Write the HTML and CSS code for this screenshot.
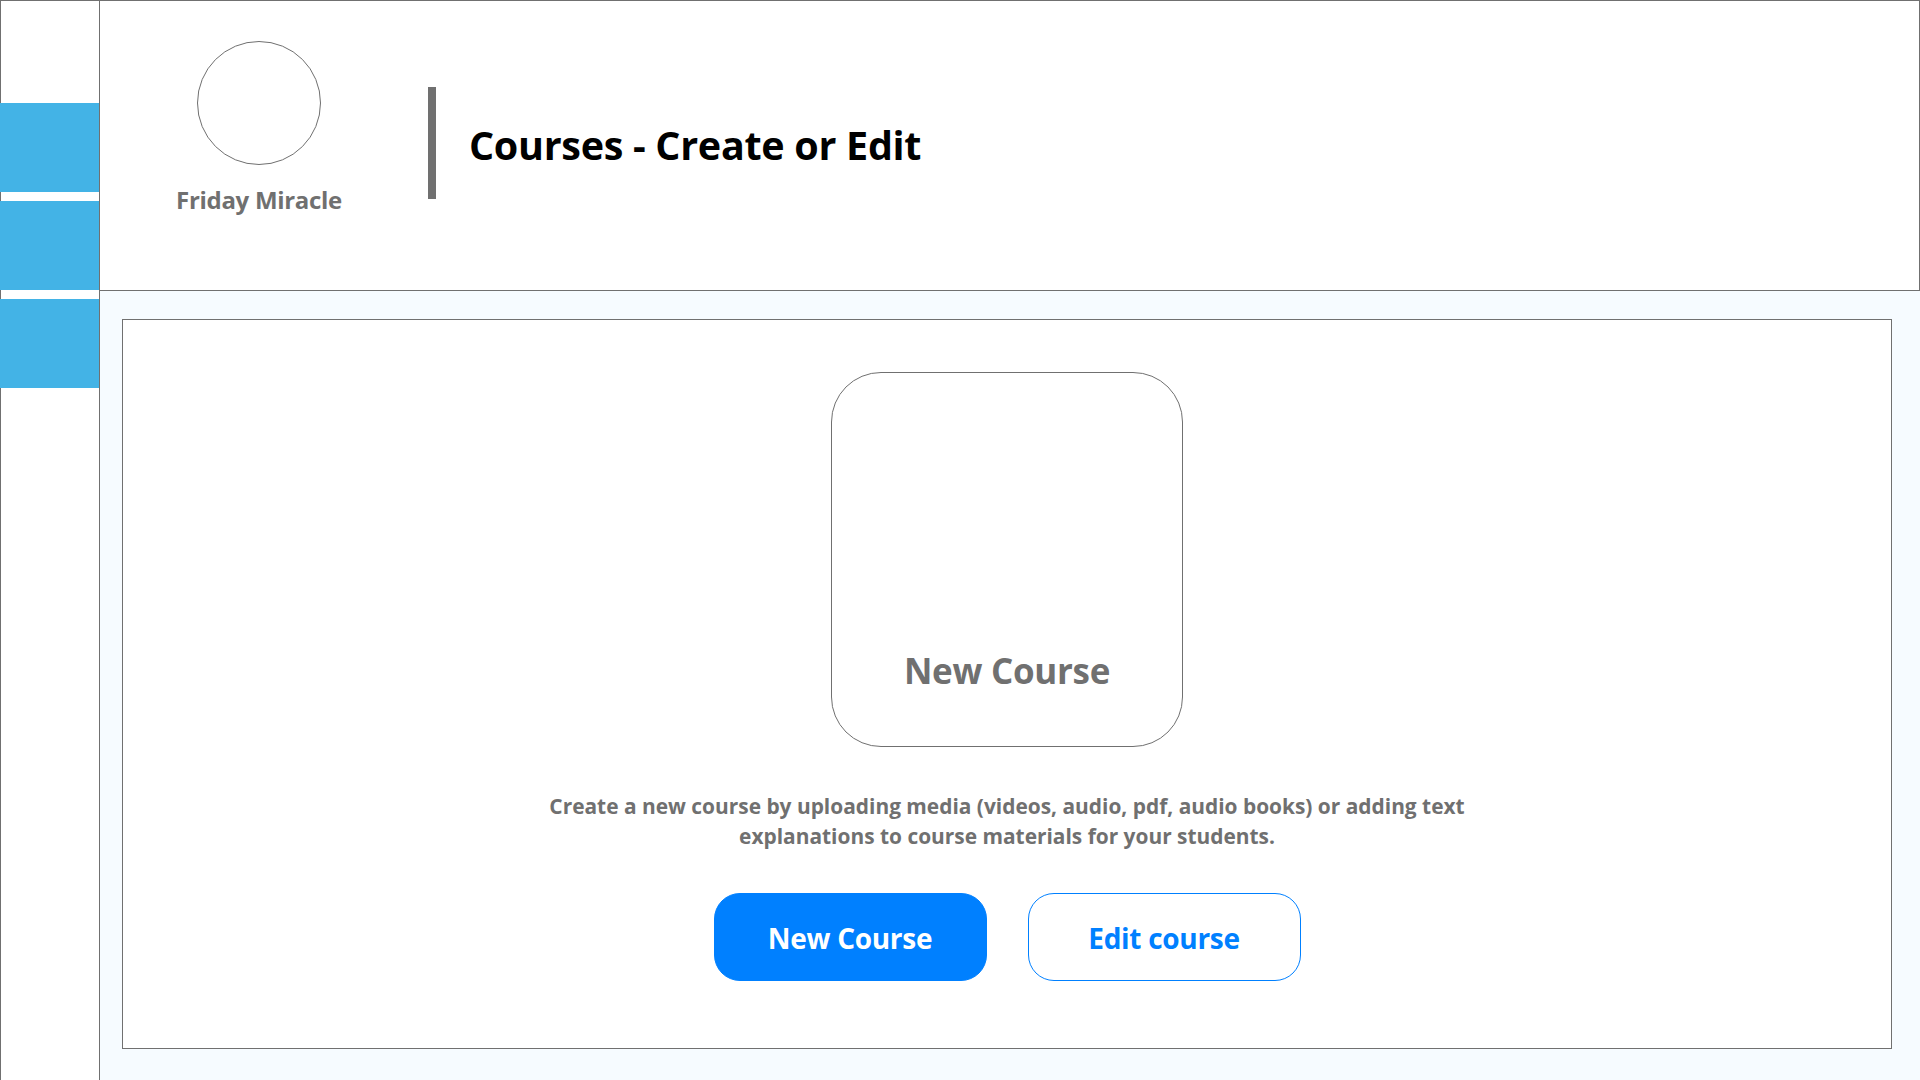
FILE: index.html
```html
<!DOCTYPE html>
<html lang="en">
<head>
<meta charset="utf-8">
<title>Courses - Create or Edit</title>
<link rel="stylesheet" href="styles.css">
</head>
<body>
<div class="app">
  <aside class="sidebar">
    <div class="nav-block"></div>
    <div class="nav-block"></div>
    <div class="nav-block"></div>
  </aside>
  <div class="main-col">
    <header class="header">
      <div class="profile">
        <div class="avatar"></div>
        <div class="profile-name">Friday Miracle</div>
      </div>
      <div class="divider"></div>
      <h1 class="page-title">Courses - Create or Edit</h1>
    </header>
    <main class="content">
      <section class="card">
        <div class="tile">
          <span class="tile-label">New Course</span>
        </div>
        <p class="description">Create a new course by uploading media (videos, audio, pdf, audio books) or adding text<br>explanations to course materials for your students.</p>
        <div class="actions">
          <button class="btn btn-primary">New Course</button>
          <button class="btn btn-outline">Edit course</button>
        </div>
      </section>
    </main>
  </div>
</div>
</body>
</html>
```
FILE: styles.css
```css
* { box-sizing: border-box; }
html, body {
  margin: 0;
  padding: 0;
  height: 100%;
}
body {
  font-family: "Open Sans", "Noto Sans", "Liberation Sans", sans-serif;
  background: #ffffff;
}
.app {
  display: flex;
  width: 1920px;
  height: 1080px;
}
.sidebar {
  width: 100px;
  flex: none;
  border-left: 1px solid #707070;
  border-top: 1px solid #707070;
  border-right: 1px solid #707070;
  background: #ffffff;
  padding-top: 102px;
  display: flex;
  flex-direction: column;
  gap: 9px;
}
.nav-block {
  height: 89px;
  background: #43b3e6;
  margin-left: -1px;
}
.main-col {
  flex: 1;
  display: flex;
  flex-direction: column;
  min-width: 0;
}
.header {
  height: 291px;
  flex: none;
  border-top: 1px solid #707070;
  border-right: 1px solid #707070;
  border-bottom: 1px solid #707070;
  background: #ffffff;
  display: flex;
  align-items: flex-start;
}
.profile {
  width: 318px;
  display: flex;
  flex-direction: column;
  align-items: center;
  padding-top: 40px;
}
.avatar {
  width: 124px;
  height: 124px;
  border: 1px solid #707070;
  border-radius: 50%;
}
.profile-name {
  margin-top: 19px;
  font-size: 24px;
  font-weight: 700;
  color: #707070;
  line-height: 32px;
  letter-spacing: -0.3px;
}
.divider {
  width: 8px;
  height: 112px;
  background: #707070;
  margin-top: 86px;
  margin-left: 10px;
  flex: none;
}
.page-title {
  margin: 0 0 0 33px;
  padding-top: 118px;
  font-size: 39.5px;
  line-height: 52px;
  font-weight: 700;
  color: #000000;
  letter-spacing: -0.3px;
}
.content {
  flex: 1;
  background: #f6fbff;
  padding: 28px 28px 31px 22px;
  display: flex;
}
.card {
  flex: 1;
  border: 1px solid #707070;
  background: #ffffff;
  display: flex;
  flex-direction: column;
  align-items: center;
  padding-top: 52px;
}
.tile {
  width: 352px;
  height: 375px;
  border: 1px solid #707070;
  border-radius: 50px;
  display: flex;
  align-items: flex-end;
  justify-content: center;
  padding-bottom: 52px;
}
.tile-label {
  font-size: 35px;
  font-weight: 700;
  color: #707070;
  line-height: 46px;
  letter-spacing: -0.3px;
}
.description {
  margin: 44px 0 0 0;
  text-align: center;
  font-size: 20.9px;
  line-height: 30px;
  font-weight: 700;
  color: #707070;
}
.actions {
  margin-top: 42px;
  display: flex;
  gap: 41px;
}
.btn {
  width: 273px;
  height: 88px;
  padding-top: 3px;
  border-radius: 26px;
  font-family: inherit;
  font-size: 28px;
  font-weight: 700;
  letter-spacing: -0.3px;
  cursor: pointer;
}
.btn-primary {
  background: #0080ff;
  color: #ffffff;
  border: 1px solid #0080ff;
}
.btn-outline {
  background: #ffffff;
  color: #0080ff;
  border: 1px solid #0080ff;
}
```
